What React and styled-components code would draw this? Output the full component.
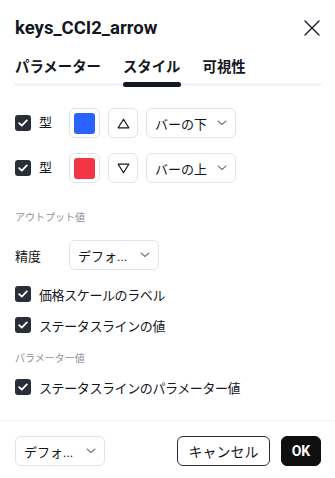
import React from "react";
import styled, { createGlobalStyle } from "styled-components";

const GlobalStyle = createGlobalStyle`
  html, body { margin: 0; padding: 0; background: #fff; }
  body {
    font-family: Roboto, "Noto Sans CJK JP", "Noto Sans", sans-serif;
    color: #131722;
    -webkit-font-smoothing: antialiased;
  }
  * { box-sizing: border-box; }
`;

const Dialog = styled.div`
  width: 335px;
  height: 478px;
  display: flex;
  flex-direction: column;
  background: #fff;
`;

const Header = styled.div`
  display: flex;
  align-items: center;
  justify-content: space-between;
  padding: 16px 15px 0 15px;
  height: 40px;
`;

const Title = styled.div`
  font-size: 18.5px;
  font-weight: 700;
  line-height: 24px;
`;

const CloseButton = styled.button`
  border: 0;
  background: none;
  padding: 0;
  width: 20px;
  height: 20px;
  display: flex;
  align-items: center;
  justify-content: center;
  margin-right: -2px;
  color: #131722;
`;

const TabBar = styled.div`
  display: flex;
  gap: 22px;
  margin: 18px 14px 0 15px;
  border-bottom: 3px solid #f0f3fa;
`;

const Tab = styled.div`
  position: relative;
  font-size: 14.4px;
  font-weight: 700;
  line-height: 20px;
  padding-bottom: 5px;
  color: #131722;
  ${(p) =>
    p.$active &&
    `
    &::after {
      content: "";
      position: absolute;
      left: 0;
      right: 0;
      bottom: -4px;
      height: 5px;
      border-radius: 3px;
      background: #131722;
    }
  `}
`;

const Content = styled.div`
  display: flex;
  flex-direction: column;
  padding: 22px 15px 0 15px;
`;

const Row = styled.div`
  display: flex;
  align-items: center;
  height: 30px;
  gap: 8px;
  margin-top: ${(p) => p.$mt || 0}px;
`;

const RowLabel = styled.div`
  display: flex;
  align-items: center;
  gap: 8px;
  width: 46px;
  font-size: 13px;
  line-height: 18px;
`;

const Box = styled.span`
  width: 16px;
  height: 16px;
  border-radius: 3px;
  background: #2a2e39;
  display: inline-flex;
  align-items: center;
  justify-content: center;
  flex: none;
`;

const SwatchButton = styled.div`
  width: 31px;
  height: 30px;
  border: 1px solid #e0e3eb;
  border-radius: 6px;
  display: flex;
  align-items: center;
  justify-content: center;
`;

const Swatch = styled.div`
  width: 21px;
  height: 21px;
  border-radius: 3px;
  background: ${(p) => p.$color};
`;

const IconButton = styled.div`
  width: 30px;
  height: 30px;
  border: 1px solid #e0e3eb;
  border-radius: 6px;
  display: flex;
  align-items: center;
  justify-content: center;
`;

const Select = styled.div`
  width: ${(p) => p.$w || 90}px;
  height: 30px;
  border: 1px solid #e0e3eb;
  border-radius: 6px;
  display: flex;
  align-items: center;
  justify-content: space-between;
  padding: 0 8px 0 8px;
  font-size: 13px;
  color: #131722;
`;

const SectionTitle = styled.div`
  font-size: 10px;
  line-height: 14px;
  color: #8f929b;
  margin-top: ${(p) => p.$mt || 0}px;
`;

const FieldLabel = styled.div`
  width: 46px;
  font-size: 13px;
`;

const CheckRow = styled.label`
  display: flex;
  align-items: center;
  gap: 8px;
  height: 24px;
  font-size: 13px;
  letter-spacing: -0.4px;
  margin-top: ${(p) => p.$mt || 0}px;
`;

const Footer = styled.div`
  margin-top: auto;
  border-top: 1px solid #f0f3fa;
  padding: 15px 14px 12px 15px;
  display: flex;
  align-items: center;
`;

const Buttons = styled.div`
  margin-left: auto;
  display: flex;
  gap: 11px;
`;

const Button = styled.button`
  height: 30px;
  padding: 0;
  width: ${(p) => p.$w}px;
  border-radius: 6px;
  font-family: inherit;
  font-size: 14px;
  font-weight: ${(p) => (p.$primary ? 700 : 400)};
  background: ${(p) => (p.$primary ? "#0f0f0f" : "#fff")};
  color: ${(p) => (p.$primary ? "#fff" : "#131722")};
  border: 1px solid ${(p) => (p.$primary ? "#0f0f0f" : "#2a2e39")};
`;

const Check = () => (
  <Box>
    <svg width="10" height="8" viewBox="0 0 10 8">
      <path d="M1.2 4.2 L3.8 6.6 L8.8 1.4" fill="none" stroke="#fff" strokeWidth="1.8" strokeLinecap="round" strokeLinejoin="round" />
    </svg>
  </Box>
);

const Chevron = () => (
  <svg width="10" height="6" viewBox="0 0 10 6">
    <path d="M1 1 L5 4.5 L9 1" fill="none" stroke="#787b86" strokeWidth="1.1" strokeLinecap="round" strokeLinejoin="round" />
  </svg>
);

const Triangle = ({ down }) => (
  <svg width="13" height="11" viewBox="0 0 13 11">
    {down ? (
      <path d="M1.2 1.2 H11.8 L6.5 9.8 Z" fill="none" stroke="#131722" strokeWidth="1.2" strokeLinejoin="round" />
    ) : (
      <path d="M6.5 1.2 L11.8 9.8 H1.2 Z" fill="none" stroke="#131722" strokeWidth="1.2" strokeLinejoin="round" />
    )}
  </svg>
);

export default function App() {
  return (
    <>
      <GlobalStyle />
      <Dialog>
        <Header>
          <Title>keys_CCI2_arrow</Title>
          <CloseButton aria-label="close">
            <svg width="16" height="16" viewBox="0 0 16 16">
              <path d="M1 1 L15 15 M15 1 L1 15" stroke="#131722" strokeWidth="1.3" strokeLinecap="round" />
            </svg>
          </CloseButton>
        </Header>
        <TabBar>
          <Tab>パラメーター</Tab>
          <Tab $active>スタイル</Tab>
          <Tab>可視性</Tab>
        </TabBar>
        <Content>
          <Row>
            <RowLabel>
              <Check />
              型
            </RowLabel>
            <SwatchButton>
              <Swatch $color="#2962ff" />
            </SwatchButton>
            <IconButton>
              <Triangle />
            </IconButton>
            <Select>
              <span>バーの下</span>
              <Chevron />
            </Select>
          </Row>
          <Row $mt={15}>
            <RowLabel>
              <Check />
              型
            </RowLabel>
            <SwatchButton>
              <Swatch $color="#f23645" />
            </SwatchButton>
            <IconButton>
              <Triangle down />
            </IconButton>
            <Select>
              <span>バーの上</span>
              <Chevron />
            </Select>
          </Row>
          <SectionTitle $mt={28}>アウトプット値</SectionTitle>
          <Row $mt={15}>
            <FieldLabel>精度</FieldLabel>
            <Select>
              <span>デフォ...</span>
              <Chevron />
            </Select>
          </Row>
          <CheckRow $mt={12}>
            <Check />
            価格スケールのラベル
          </CheckRow>
          <CheckRow $mt={7}>
            <Check />
            ステータスラインの値
          </CheckRow>
          <SectionTitle $mt={15}>パラメーター値</SectionTitle>
          <CheckRow $mt={9}>
            <Check />
            ステータスラインのパラメーター値
          </CheckRow>
        </Content>
        <Footer>
          <Select>
            <span>デフォ...</span>
            <Chevron />
          </Select>
          <Buttons>
            <Button $w={93}>キャンセル</Button>
            <Button $w={40} $primary>OK</Button>
          </Buttons>
        </Footer>
      </Dialog>
    </>
  );
}
